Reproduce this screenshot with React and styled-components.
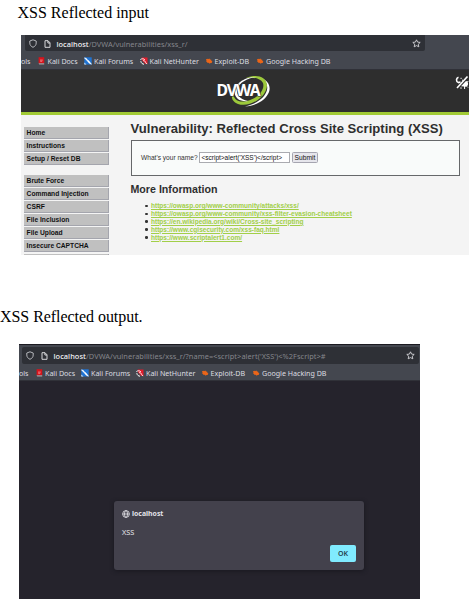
import React from "react";
import styled, { createGlobalStyle } from "styled-components";

const Global = createGlobalStyle`
  * { box-sizing: border-box; }
  body { margin: 0; background: #fff; overflow: hidden; }
`;

const Page = styled.main`
  width: 470px;
  height: 599px;
  overflow: hidden;
  display: flex;
  flex-direction: column;
  align-items: flex-start;
  background: #fff;
`;

const Caption = styled.p`
  margin: ${(p) => p.$margin};
  height: 20px;
  font: 16px/20px "Liberation Serif", serif;
  letter-spacing: ${(p) => p.$spacing || "0"};
  color: #000;
  white-space: nowrap;
`;

const Browser = styled.section`
  width: ${(p) => p.$width}px;
  height: ${(p) => p.$height}px;
  margin-left: ${(p) => p.$left}px;
  display: flex;
  flex-direction: column;
  overflow: hidden;
  background: #44474f;
  border-top: ${(p) => (p.$edge ? "1px solid #1b1a21" : "0")};
`;

const AddressRow = styled.div`
  height: ${(p) => p.$height}px;
  flex: none;
  display: flex;
  padding: ${(p) => p.$padding};
`;

const AddressField = styled.div`
  width: ${(p) => p.$width}px;
  display: flex;
  align-items: center;
  padding: ${(p) => p.$padTop}px 4px 0;
  border-radius: ${(p) => p.$radius};
  background: #2e3036;
  color: #dddde0;
`;

const ShieldSvg = styled.svg`
  width: 8px;
  height: 9px;
  margin-right: 7px;
  flex: none;
`;

const PageSvg = styled.svg`
  width: 7px;
  height: 8px;
  margin-right: ${(p) => p.$gap}px;
  flex: none;
`;

const StarSvg = styled.svg`
  width: 9px;
  height: 9px;
  margin-left: auto;
  flex: none;
`;

const Url = styled.span`
  font: 7.4px/12px "Noto Sans", sans-serif;
  letter-spacing: ${(p) => p.$spacing}px;
  color: #85868c;
  white-space: pre;
`;

const Host = styled.span`
  color: #f4f4f7;
  font-weight: 500;
`;

const Bookmarks = styled.nav`
  height: ${(p) => p.$height}px;
  flex: none;
  display: flex;
  align-items: center;
  padding-top: 1px;
  border-bottom: 1px solid #303138;
  font: 7.1px/12px "Noto Sans", sans-serif;
  color: #dcdde0;
  white-space: nowrap;
`;

const Bookmark = styled.span`
  width: ${(p) => p.$width}px;
  flex: none;
  display: flex;
  align-items: center;
`;

const MarkSvg = styled.svg`
  width: 8px;
  height: 8px;
  margin-right: ${(p) => p.$gap || 1.5}px;
  flex: none;
`;

function Shield() {
  return (
    <ShieldSvg viewBox="0 0 8 9" fill="none" stroke="#c4c5c9" strokeWidth="0.9">
      <path d="M4 .8 7.2 2v2C7.2 6.2 5.9 7.4 4 8.3 2.1 7.4.8 6.2.8 4V2Z" />
    </ShieldSvg>
  );
}

function Document({ gap }) {
  return (
    <PageSvg $gap={gap} viewBox="0 0 7 8" fill="none" stroke="#d8d8db" strokeWidth="1">
      <path d="M1 .7h3L6 2.8v4.500H1Z" />
      <path d="M3.9.8V3H6" />
    </PageSvg>
  );
}

function Star() {
  return (
    <StarSvg viewBox="0 0 9 9" fill="none" stroke="#d6d6da" strokeWidth="0.9" strokeLinejoin="round">
      <path d="m4.5.8 1.1 2.3 2.6.3-1.9 1.8.5 2.6-2.3-1.2-2.3 1.2.5-2.6L.8 3.4l2.6-.3Z" />
    </StarSvg>
  );
}

function Mark({ kind, gap }) {
  return (
    <MarkSvg $gap={gap} viewBox="0 0 8 8">
      {kind === "docs" && (
        <>
          <path d="M.6.2h5.600v6.1H.6Z" fill="#d6141c" />
          <path d="M.6 6.2h5.600v1.2H1.2Z" fill="#ad9da0" />
          <path d="M2 3.1h2.8M2.2 4.3h2" stroke="#f6a5a7" strokeWidth=".7" />
        </>
      )}
      {kind === "forums" && (
        <>
          <path d="M.3.3h7.4v7.2H.3Z" fill="#2074d4" />
          <path d="M.3.8c2 .2 2.8 1.2 3.3 2.5C5.1 3.4 5.8 5 7.6 7.3 5.7 6.7 4.8 6 3.7 4.4 2.8 3.4 1.4 2 .3.8Z" fill="#fff" stroke="#fff" strokeWidth=".4" />
          <path d="M.3 5.5 2.5 7.5H.3Z" fill="#dce9f7" />
        </>
      )}
      {kind === "hunter" && (
        <>
          <path d="M1.8.6h5.700v6.4H5.200L1.800 3Z" fill="#e01c2c" />
          <path d="M.4 2.600c1.200-1.100 3.200-1.100 4.400.1M.8 4.200c.3 1.900 1.700 3 3.200 3" fill="none" stroke="#fff" strokeWidth="1" />
          <path d="M3.100 3.600c1.700 0 2.300.9 2.500 1.800.2.800.7 1.200 1.500 1.500" fill="none" stroke="#fff" strokeWidth=".9" />
        </>
      )}
      {kind === "exploit" && (
        <path d="m1 2.2 1.5-.5.5.6 1.3-.7.8.8 1.2.3-.1.9 1.3.8-.8.6.3 1.1-1.4-.2-.9.8-1-.9-1.3.1-.2-.9-1.2-.4.5-.8Z" fill="#eb6518" />
      )}
    </MarkSvg>
  );
}

function Toolbar({ height, widths }) {
  return (
    <Bookmarks $height={height}>
      <Bookmark $width={widths[0]}>ols</Bookmark>
      <Bookmark $width={widths[1]}><Mark kind="docs" />Kali Docs</Bookmark>
      <Bookmark $width={widths[2]}><Mark kind="forums" gap={2} />Kali Forums</Bookmark>
      <Bookmark $width={widths[3]}><Mark kind="hunter" gap={2} />Kali NetHunter</Bookmark>
      <Bookmark $width={widths[4]}><Mark kind="exploit" gap={2} />Exploit-DB</Bookmark>
      <Bookmark $width={80}><Mark kind="exploit" gap={2} />Google Hacking DB</Bookmark>
    </Bookmarks>
  );
}

const Banner = styled.header`
  height: 45px;
  flex: none;
  display: flex;
  justify-content: space-between;
  padding: 5px 0 0 195px;
  background: #2e2e2e;
  border-bottom: 3px solid #a2cb35;
`;

const LogoSvg = styled.svg`
  width: 56px;
  height: 34px;
`;

const ThemeSvg = styled.svg`
  width: 14px;
  height: 14px;
  margin-top: 1px;
`;

const SiteBody = styled.div`
  flex: 1;
  display: flex;
  overflow: hidden;
  background: #f4f4f4;
  color: #2e2e2e;
  font-family: "Liberation Sans", sans-serif;
`;

const Menu = styled.aside`
  width: 88px;
  flex: none;
  padding: 12px 0 0 3px;
`;

const MenuGroup = styled.div`
  display: flex;
  flex-direction: column;
  gap: 1.1px;
  margin-bottom: 9.8px;
`;

const MenuItem = styled.div`
  height: 12px;
  flex: none;
  padding-left: 2.6px;
  background: #c0c0c0;
  border-right: 1px solid #a4a5ad;
  border-bottom: 1px solid #a4a5ad;
  font-size: 6.7px;
  font-weight: 700;
  line-height: 12px;
  color: #111;
  white-space: nowrap;
`;

const Content = styled.div`
  flex: 1;
  padding: 6px 9px 0 21.5px;
`;

const Title = styled.h1`
  margin: 0;
  height: 19px;
  font-size: 13.1px;
  line-height: 15px;
  white-space: nowrap;
`;

const FormBox = styled.form`
  height: 36px;
  display: flex;
  align-items: center;
  padding: 0 0 1px 9.5px;
  background: #f9fbfa;
  border: 1px solid #66686a;
  font-size: 6.6px;
  color: #333;
  white-space: nowrap;
`;

const NameLabel = styled.label`
  width: 58px;
`;

const NameField = styled.div`
  width: 91px;
  height: 11px;
  padding-left: 1.5px;
  background: #fff;
  border: 1px solid #aaabb0;
  color: #111;
  font-size: 6.5px;
  line-height: 9.8px;
`;

const Submit = styled.button`
  width: 26px;
  height: 11px;
  margin-left: 2px;
  padding: 0;
  border: 1px solid #a5a5b0;
  border-radius: 1.5px;
  background: #e6e6ec;
  color: #111;
  font: 6.7px/9px "Liberation Sans", sans-serif;
`;

const Subtitle = styled.h2`
  margin: 7px 0 7px;
  font-size: 10.65px;
  line-height: 12px;
`;

const Links = styled.ul`
  margin: 0;
  padding: 0 0 0 20.5px;
  list-style: none;
`;

const LinkItem = styled.li`
  height: 7.9px;
  display: flex;
  align-items: center;
  gap: 3.5px;
  font-size: 6.56px;
  font-weight: 700;
  line-height: 7.8px;
  white-space: nowrap;
  &::before {
    content: "";
    width: 2.5px;
    height: 2.5px;
    margin-left: -6px;
    border-radius: 50%;
    background: #333;
  }
`;

const Link = styled.a`
  color: #a2cf48;
  text-decoration: underline;
`;

const BlankPage = styled.div`
  flex: 1;
  display: flex;
  justify-content: flex-start;
  align-items: flex-start;
  padding: 120px 0 0 95px;
  background: #25232c;
`;

const Dialog = styled.div`
  width: 250px;
  height: 69px;
  display: flex;
  flex-direction: column;
  padding: 7px 8px 8px;
  border-radius: 3px;
  background: #43414c;
  box-shadow: 0 1px 4px #19181f;
  color: #e4e3e9;
  font: 7px/11px "Noto Sans", sans-serif;
`;

const Origin = styled.div`
  display: flex;
  align-items: center;
  gap: 2px;
  font-weight: 700;
  font-size: 6.9px;
`;

const GlobeSvg = styled.svg`
  width: 8px;
  height: 8px;
`;

const Message = styled.div`
  margin-top: 7.5px;
  font-size: 7.3px;
`;

const OkButton = styled.button`
  width: 26px;
  height: 17px;
  margin: auto 0 0 auto;
  padding: 0;
  border: 0;
  border-radius: 2px;
  background: #80ebff;
  color: #24404b;
  font: 600 7px/17px "Noto Sans", sans-serif;
`;

const LogoText = styled.text`
  font: 700 16.5px "Noto Sans", sans-serif;
  letter-spacing: -1.1px;
  fill: #fff;
  stroke: #2e2e2e;
  stroke-width: 1.2px;
  paint-order: stroke;
`;

const tools = ["Home", "Instructions", "Setup / Reset DB"];
const attacks = ["Brute Force", "Command Injection", "CSRF", "File Inclusion", "File Upload", "Insecure CAPTCHA", ""];
const links = [
  "https://owasp.org/www-community/attacks/xss/",
  "https://owasp.org/www-community/xss-filter-evasion-cheatsheet",
  "https://en.wikipedia.org/wiki/Cross-site_scripting",
  "https://www.cgisecurity.com/xss-faq.html",
  "https://www.scriptalert1.com/",
];

function Logo() {
  return (
    <LogoSvg viewBox="0 0 56 34">
      <path d="M46 3.500C52 6 55 11 53 17 50 25 40 31 29 31.500 40 29 49 23 51 15 52 10 50 6 46 3.500Z" fill="#fff" />
      <path d="M30 3C40-1 50 1 51 10 51 22 34 33 22 29 15 26 15 21 17 17 17 25 23 28 31 26 43 23 49 14 47 8 44 3 37 2 30 3Z" fill="#9cc83b" />
      <path d="M40 2C27 2 18 10 18.500 17 19 24 25 27 32 26 24 24 20 20 21.500 14 23 8 31 3 40 2Z" fill="#fff" />
      <LogoText x="0.5" y="20.5" textLength="43" lengthAdjust="spacingAndGlyphs">DVWA</LogoText>
    </LogoSvg>
  );
}

function ThemeToggle() {
  return (
    <ThemeSvg viewBox="0 0 14 14" fill="none" stroke="#fff">
      <path d="M3.500 1.200C1 2 .7 5.800 3.400 6.600L5.500 6" strokeWidth="1.6" />
      <path d="M12.500.500 2 12" strokeWidth="1.6" />
      <path d="m6 10.200 5-5.200c2.400.500 3 4.500.2 5.700Z" fill="#fff" stroke="none" />
      <path d="M6 11.300v1.500M9.600 10v3M12 10.500l1 1M12 6l1.400-.6M5.500 2.300h1.200M7 4.200h1" strokeWidth="1" />
    </ThemeSvg>
  );
}

export default function App() {
  return (
    <>
      <Global />
      <Page>
        <Caption $margin="3px 0 12px 17.5px">XSS Reflected input</Caption>
        <Browser $width={448} $height={220} $left={21}>
          <AddressRow $height={17} $padding="0 0 1px 4px">
            <AddressField $width={400} $padTop={1} $radius="0 0 2px 2px">
              <Shield />
              <Document gap={5.5} />
              <Url $spacing={0.03}><Host>localhost</Host>/DVWA/vulnerabilities/xss_r/</Url>
              <Star />
            </AddressField>
          </AddressRow>
          <Toolbar height={18} widths={[17, 46, 55.5, 65, 51.5]} />
          <Banner><Logo /><ThemeToggle /></Banner>
          <SiteBody>
            <Menu>
              <MenuGroup>{tools.map((t) => <MenuItem key={t}>{t}</MenuItem>)}</MenuGroup>
              <MenuGroup>{attacks.map((t) => <MenuItem key={t}>{t}</MenuItem>)}</MenuGroup>
            </Menu>
            <Content>
              <Title>Vulnerability: Reflected Cross Site Scripting (XSS)</Title>
              <FormBox>
                <NameLabel>What's your name?</NameLabel>
                <NameField>{"<script>alert('XSS')</script>"}</NameField>
                <Submit type="button">Submit</Submit>
              </FormBox>
              <Subtitle>More Information</Subtitle>
              <Links>
                {links.map((l) => <LinkItem key={l}><Link>{l}</Link></LinkItem>)}
              </Links>
            </Content>
          </SiteBody>
        </Browser>
        <Caption $margin="52px 0 17px 0" $spacing="-0.05px">XSS Reflected output.</Caption>
        <Browser $width={401} $height={255} $left={19} $edge>
          <AddressRow $height={19} $padding="2px 0 0 3px">
            <AddressField $width={397} $padTop={0} $radius="2px">
              <Shield />
              <Document gap={5.5} />
              <Url $spacing={0.06}><Host>localhost</Host>{"/DVWA/vulnerabilities/xss_r/?name=<script>alert('XSS')<%2Fscript>#"}</Url>
              <Star />
            </AddressField>
          </AddressRow>
          <Toolbar height={17} widths={[16.5, 45.5, 55, 64.5, 51.5]} />
          <BlankPage>
            <Dialog>
              <Origin>
                <GlobeSvg viewBox="0 0 8 8" fill="none" stroke="#f0eff4" strokeWidth=".75">
                  <circle cx="4" cy="4" r="3.4" />
                  <ellipse cx="4" cy="4" rx="1.5" ry="3.4" />
                  <path d="M.7 4h6.6" />
                </GlobeSvg>
                localhost
              </Origin>
              <Message>XSS</Message>
              <OkButton type="button">OK</OkButton>
            </Dialog>
          </BlankPage>
        </Browser>
      </Page>
    </>
  );
}
